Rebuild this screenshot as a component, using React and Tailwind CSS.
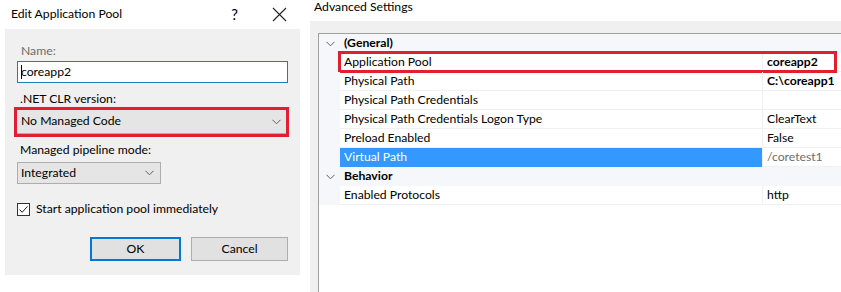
import React from "react";

const Chevron = ({ className = "" }) => (
  <svg width="9" height="6" viewBox="0 0 9 6" className={className}>
    <path d="M0.5 0.8 L4.5 4.8 L8.5 0.8" fill="none" stroke="#606060" strokeWidth="1" />
  </svg>
);

const Combo = ({ value, width }) => (
  <div className={`flex items-center justify-between h-[22px] bg-[#e5e5e5] border border-[#adadad] pl-[3px] pr-[6px] ${width}`}>
    <span>{value}</span>
    <Chevron />
  </div>
);

const EditPool = () => (
  <div className="w-[300px] shrink-0">
    <div className="h-[29px] flex items-center pl-[11px] pr-[13px]">
      <span className="flex-1">Edit Application Pool</span>
      <span className="mr-[34px] text-[15px] leading-none">?</span>
      <svg width="15" height="15" viewBox="0 0 15 15">
        <path d="M1 1 L14 14 M14 1 L1 14" stroke="#222" strokeWidth="1.1" />
      </svg>
    </div>
    <div className="ml-[5px] w-[295px] h-[246px] bg-[#f0f0f0] pl-[12px] pr-[12px] pt-[14px]">
      <div className="h-[16px] leading-[16px] pl-[4px] text-[#6d6d6d]">Name:</div>
      <div className="mt-[2px] h-[22px] w-[271px] border border-[#1a7fb8] bg-white flex items-center pl-[3px]">
        <span className="w-px h-[14px] bg-black -mr-px" />
        <span>coreapp2</span>
      </div>
      <div className="mt-[8px] h-[16px] leading-[16px] pl-[3px]">.NET CLR version:</div>
      <div className="-ml-[3px] w-[275px] h-[30px] border-[3px] border-[#e0202e]">
        <div className="flex items-center justify-between h-[24px] bg-[#e5e5e5] border-b border-[#adadad] pl-[4px] pr-[5px]">
          <span>No Managed Code</span>
          <Chevron />
        </div>
      </div>
      <div className="mt-[5px] h-[16px] leading-[16px] pl-[3px]">Managed pipeline mode:</div>
      <div className="mt-[4px]">
        <Combo value="Integrated" width="w-[144px]" />
      </div>
      <div className="mt-[17px] flex items-center h-[16px]">
        <div className="w-[13px] h-[13px] border border-[#333] bg-white flex items-center justify-center">
          <svg width="11" height="11" viewBox="0 0 11 11">
            <path d="M1.5 5.5 L4.2 8.3 L9.5 2.3" fill="none" stroke="#222" strokeWidth="1" />
          </svg>
        </div>
        <span className="ml-[6px]">Start application pool immediately</span>
      </div>
      <div className="mt-[20px] flex pl-[73px]">
        <button className="w-[91px] h-[24px] border-2 border-[#0078d7] bg-[#e1e1e1]">OK</button>
        <button className="ml-[10px] w-[97px] h-[24px] border border-[#adadad] bg-[#e1e1e1]">Cancel</button>
      </div>
    </div>
  </div>
);

const rows = [
  { cat: "(General)" },
  { name: "Application Pool", value: "coreapp2", bold: true, mark: true },
  { name: "Physical Path", value: "C:\\coreapp1", bold: true },
  { name: "Physical Path Credentials", value: "" },
  { name: "Physical Path Credentials Logon Type", value: "ClearText" },
  { name: "Preload Enabled", value: "False" },
  { name: "Virtual Path", value: "/coretest1", selected: true },
  { cat: "Behavior" },
  { name: "Enabled Protocols", value: "http" },
];

const AdvancedSettings = () => (
  <div className="ml-[10px] flex-1 flex flex-col">
    <div className="h-[21px] pl-[4px] leading-[14px]">Advanced Settings</div>
    <div className="flex-1 bg-[#f0f0f0] pl-[8px] pt-[12px] flex">
      <div className="flex-1 bg-white border-l border-t border-[#a0a0a0]">
        {rows.map((r, i) =>
          r.cat ? (
            <div key={i} className="flex h-[19px] items-center bg-[#f5f7fb]">
              <div className="w-[21px] flex justify-center pl-[1px]">
                <Chevron />
              </div>
              <span className="pl-[4px] font-bold">{r.cat}</span>
            </div>
          ) : (
            <div key={i} className="relative flex h-[19px]">
              <div className="w-[21px] bg-[#f5f7fb]" />
              <div
                className={`w-[422px] pl-[4px] flex items-center border-b ${
                  r.selected ? "bg-[#3399ff] text-white border-[#3399ff]" : "border-[#f0f0f0]"
                }`}
              >
                {r.name}
              </div>
              <div
                className={`flex-1 pl-[4px] flex items-center border-l border-b border-[#f0f0f0] ${
                  r.bold ? "font-bold" : ""
                } ${r.selected ? "text-[#6d6d6d]" : ""}`}
              >
                {r.value}
              </div>
              {r.mark && (
                <div className="absolute left-[19px] right-[4px] top-[-2px] bottom-[-1px] border-[3px] border-[#e0202e]" />
              )}
            </div>
          )
        )}
      </div>
    </div>
  </div>
);

export default function App() {
  return (
    <div className="w-[841px] h-[292px] flex bg-white text-[12.2px] text-black overflow-hidden font-['Lato','Liberation_Sans',sans-serif]">
      <EditPool />
      <AdvancedSettings />
    </div>
  );
}
